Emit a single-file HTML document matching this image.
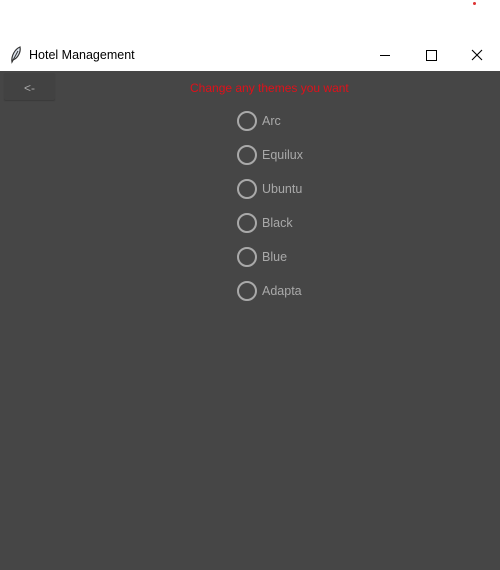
<!DOCTYPE html>
<html><head><style>
body{margin:0;width:500px;height:570px;background:#fff;font-family:"Liberation Sans",sans-serif;position:relative;overflow:hidden}
.t{position:absolute;white-space:nowrap}
.app{position:absolute;left:0;top:71px;width:500px;height:499px;background:#464646}
.btn{position:absolute;left:4px;top:2px;width:51px;height:27px;background:#424242;border-radius:2px;box-shadow:0 1px 1px #3a3a3a;color:#aaa;font-size:12px;text-align:center;line-height:30px}
.r{position:absolute;left:237px;width:16px;height:16px;border:2px solid #a9a9a9;border-radius:50%}
.l{position:absolute;left:262px;color:#a9a9a9;font-size:12.5px}
</style></head><body>
<div style="position:absolute;left:473px;top:2px;width:3px;height:3px;background:#d33;border-radius:50%"></div>
<svg class="t" style="left:9px;top:46px" width="14" height="18" viewBox="0 0 14 18"><path d="M3 16 C2 10 6 3 11 1 C12 6 9 12 4 14 Z" fill="#dfe6f0" stroke="#333" stroke-width="1.2"/><path d="M3 16 L9 5" stroke="#333" stroke-width="1"/></svg>
<div class="t" style="left:29px;top:48px;font-size:12.5px;color:#000">Hotel Management</div>
<div class="t" style="left:380px;top:55px;width:10px;height:1px;background:#000"></div>
<div class="t" style="left:426px;top:50px;width:9px;height:9px;border:1px solid #000"></div>
<svg class="t" style="left:471px;top:49px" width="12" height="12"><path d="M1 1L11 11M11 1L1 11" stroke="#000" stroke-width="1.1"/></svg>
<div class="app">
<div class="btn">&lt;-</div>
<div class="t" style="left:190px;top:10px;color:#e0101a;font-size:12px">Change any themes you want</div>
<div class="r" style="top:40px"></div><div class="l" style="top:43px">Arc</div>
<div class="r" style="top:74px"></div><div class="l" style="top:77px">Equilux</div>
<div class="r" style="top:108px"></div><div class="l" style="top:111px">Ubuntu</div>
<div class="r" style="top:142px"></div><div class="l" style="top:145px">Black</div>
<div class="r" style="top:176px"></div><div class="l" style="top:179px">Blue</div>
<div class="r" style="top:210px"></div><div class="l" style="top:213px">Adapta</div>
</div>
</body></html>
